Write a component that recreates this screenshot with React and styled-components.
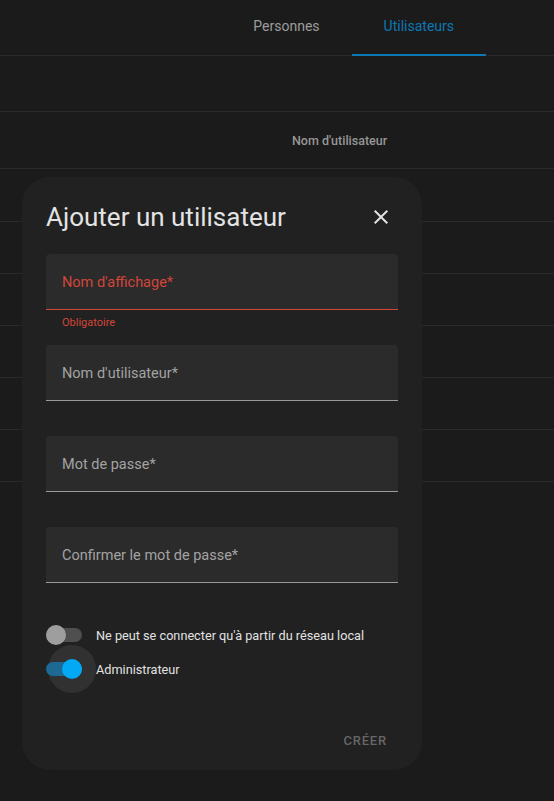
import React, { useState } from 'react';
import styled, { createGlobalStyle } from 'styled-components';

const GlobalStyle = createGlobalStyle`
	html, body {
		margin: 0;
		padding: 0;
		background: #1b1b1b;
		font-family: Roboto, 'Noto Sans', sans-serif;
	}
	* {
		box-sizing: border-box;
	}
`;

const fields = [
	{ label: "Nom d'affichage*", error: 'Obligatoire' },
	{ label: "Nom d'utilisateur*" },
	{ label: 'Mot de passe*' },
	{ label: 'Confirmer le mot de passe*' },
];

const App = () => {
	const [localOnly, setLocalOnly] = useState(false);
	const [admin, setAdmin] = useState(true);

	return (
		<>
			<GlobalStyle />
			<Page>
				<TabBar>
					<Tab>Personnes</Tab>
					<Tab $active>Utilisateurs</Tab>
				</TabBar>
				<Row $height={56} />
				<HeaderRow>
					<HeaderCell>Nom d'utilisateur</HeaderCell>
				</HeaderRow>
				<Row $height={53} />
				{[0, 1, 2, 3, 4].map((i) => (
					<Row key={i} $height={52} />
				))}

				<Dialog>
					<DialogHeader>
						<Title>Ajouter un utilisateur</Title>
						<CloseButton aria-label="Fermer">
							<svg width="24" height="24" viewBox="0 0 24 24">
								<path
									fill="currentColor"
									d="M19,6.41L17.59,5L12,10.59L6.41,5L5,6.41L10.59,12L5,17.59L6.41,19L12,13.41L17.59,19L19,17.59L13.41,12L19,6.41Z"
								/>
							</svg>
						</CloseButton>
					</DialogHeader>

					<Fields>
						{fields.map((f) => (
							<FieldBlock key={f.label}>
								<Field $error={!!f.error}>
									<FieldLabel $error={!!f.error}>{f.label}</FieldLabel>
								</Field>
								<Helper>{f.error}</Helper>
							</FieldBlock>
						))}
					</Fields>

					<Switches>
						<SwitchRow onClick={() => setLocalOnly(!localOnly)}>
							<Switch>
								<Track $on={localOnly} />
								<Thumb $on={localOnly} />
							</Switch>
							<SwitchLabel>Ne peut se connecter qu'à partir du réseau local</SwitchLabel>
						</SwitchRow>
						<SwitchRow onClick={() => setAdmin(!admin)}>
							<Switch>
								<Ripple $on={admin} />
								<Track $on={admin} />
								<Thumb $on={admin} />
							</Switch>
							<SwitchLabel>Administrateur</SwitchLabel>
						</SwitchRow>
					</Switches>

					<Actions>
						<TextButton disabled>Créer</TextButton>
					</Actions>
				</Dialog>
			</Page>
		</>
	);
};

const Page = styled.div`
	position: relative;
	height: 801px;
	overflow: hidden;
	background: #1b1b1b;
`;

const TabBar = styled.div`
	display: flex;
	justify-content: flex-end;
	height: 56px;
	padding-right: 68px;
	border-bottom: 1px solid #2a2a2a;
`;

const Tab = styled.div`
	display: flex;
	align-items: center;
	justify-content: center;
	padding: 0 32px 2px;
	font-size: 14px;
	color: ${(p) => (p.$active ? '#0d77b3' : '#9c9c9c')};
	border-bottom: 2px solid ${(p) => (p.$active ? '#0d77b3' : 'transparent')};
	margin-bottom: -1px;
`;

const Row = styled.div`
	height: ${(p) => p.$height}px;
	border-bottom: 1px solid #2a2a2a;
`;

const HeaderRow = styled(Row)`
	height: 57px;
	display: flex;
	align-items: center;
	padding-left: 292px;
`;

const HeaderCell = styled.span`
	font-size: 12.5px;
	font-weight: 500;
	color: #979797;
`;

const Dialog = styled.div`
	position: absolute;
	left: 22px;
	top: 177px;
	width: 400px;
	height: 593px;
	border-radius: 28px;
	background: #212121;
	padding: 24px 24px 0;
	display: flex;
	flex-direction: column;
`;

const DialogHeader = styled.div`
	display: flex;
	align-items: center;
	justify-content: space-between;
	height: 32px;
	margin-bottom: 21px;
`;

const Title = styled.h2`
	margin: 0;
	font-size: 26px;
	font-weight: 400;
	color: #e3e3e3;
`;

const CloseButton = styled.button`
	display: flex;
	align-items: center;
	justify-content: center;
	width: 24px;
	height: 24px;
	padding: 0;
	margin-right: 5px;
	border: none;
	background: none;
	color: #e1e1e1;
	cursor: pointer;
`;

const Fields = styled.div`
	display: flex;
	flex-direction: column;
`;

const FieldBlock = styled.div`
	margin-bottom: 16px;
`;

const Field = styled.div`
	height: 56px;
	display: flex;
	align-items: center;
	padding: 2px 16px 0;
	background: #2b2b2b;
	border-radius: 4px 4px 0 0;
	border-bottom: 1px solid ${(p) => (p.$error ? '#d2453a' : '#9a9a9a')};
`;

const FieldLabel = styled.span`
	font-size: 14.5px;
	color: ${(p) => (p.$error ? '#d2453a' : '#a3a3a3')};
`;

const Helper = styled.div`
	height: 19px;
	padding: 6px 16px 0;
	font-size: 11px;
	line-height: 13px;
	color: #d2453a;
`;

const Switches = styled.div`
	display: flex;
	flex-direction: column;
	gap: 14px;
	margin-top: 7px;
`;

const SwitchRow = styled.div`
	display: flex;
	align-items: center;
	gap: 14px;
	height: 20px;
	cursor: pointer;
`;

const Switch = styled.div`
	position: relative;
	width: 36px;
	height: 20px;
	flex-shrink: 0;
`;

const Track = styled.div`
	position: absolute;
	left: 0;
	top: 3px;
	width: 36px;
	height: 14px;
	border-radius: 7px;
	background: ${(p) => (p.$on ? '#1c6a93' : '#4f4f4f')};
`;

const Ripple = styled.div`
	position: absolute;
	left: ${(p) => (p.$on ? '2px' : '-14px')};
	top: -14px;
	width: 48px;
	height: 48px;
	border-radius: 50%;
	background: #313131;
`;

const Thumb = styled.div`
	position: absolute;
	top: 0;
	left: ${(p) => (p.$on ? '16px' : '0')};
	width: 20px;
	height: 20px;
	border-radius: 50%;
	background: ${(p) => (p.$on ? '#03a9f4' : '#9e9e9e')};
`;

const SwitchLabel = styled.span`
	position: relative;
	font-size: 12.7px;
	color: #e1e1e1;
`;

const Actions = styled.div`
	margin-top: auto;
	display: flex;
	justify-content: flex-end;
	padding: 0 11px 22px 0;
`;

const TextButton = styled.button`
	border: none;
	background: none;
	padding: 0;
	font-family: Roboto, sans-serif;
	font-size: 13px;
	font-weight: 500;
	letter-spacing: 0.8px;
	text-transform: uppercase;
	color: #666666;
`;

export default App;
